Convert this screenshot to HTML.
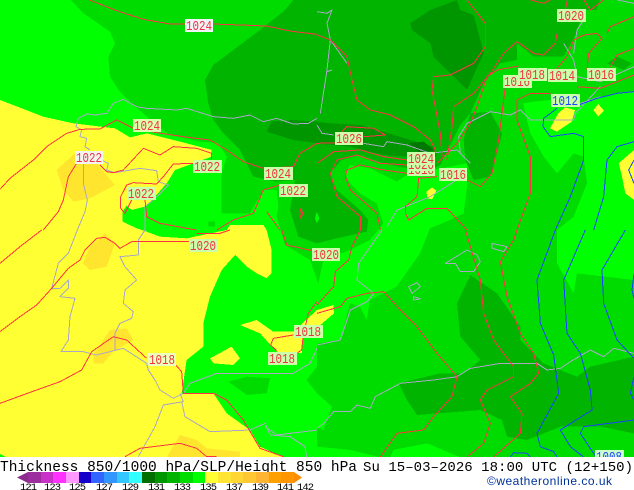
<!DOCTYPE html>
<html><head><meta charset="utf-8">
<style>
html,body{margin:0;padding:0;background:#fff;width:634px;height:490px;overflow:hidden}
svg{display:block}
.l path{fill:none;stroke-width:1;vector-effect:non-scaling-stroke;stroke-linejoin:round;shape-rendering:crispEdges}
.f path{shape-rendering:crispEdges}
.r path{stroke:#ff3344}
.b path{stroke:#1a44ff}
.g path{stroke:#a8a8c4}
text{font-family:"Liberation Mono","DejaVu Sans Mono",monospace}
.t{font-size:14px;fill:#ee3344;text-anchor:middle}
</style></head><body>
<svg width="634" height="490" viewBox="0 0 634 490" xmlns="http://www.w3.org/2000/svg">
<rect width="634" height="490" fill="#fff"/>
<rect width="634" height="457" fill="#00ff00"/>
<g transform="scale(.33333)" class="f">
<!-- dc -->
<path fill="#00dc00" d="M213,0 L250,40 330,95 345,130 325,170 330,230 360,275 400,315 470,375 510,405 600,425 655,430 680,470 665,520 665,640 750,640 790,570 830,570 835,620 830,650 855,735 930,780 955,850 970,780 1050,750 1110,720 1150,670 1130,610 1080,580 1050,550 1035,520 1050,495 1110,505 1190,545 1220,525 1401,490 1401,560 1391,640 1350,660 1290,685 1260,760 1190,860 1150,880 1110,900 1100,960 1080,920 1050,910 1021,1020 951,1030 951,1100 920,1140 951,1180 996,1220 970,1290 951,1280 951,1340 1051,1350 1141,1372 1902,1372 1902,0 Z"/>
<path fill="#00dc00" d="M685,1145 L740,1130 810,1135 800,1180 740,1185 Z"/>
<path fill="#00dc00" d="M745,1290 L790,1345 860,1372 800,1372 Z M625,665 L645,665 645,680 625,680 Z"/>
<!-- bright patches -->
<path fill="#00ff00" d="M1570,310 1601,305 1651,300 1741,310 1851,280 1902,275 1902,840 1731,820 1721,880 1671,790 1671,690 1721,650 1761,550 1751,470 1721,460 1671,520 1631,470 1591,400 1576,340 Z"/>
<path fill="#00ff00" d="M1171,1372 1180,1350 1281,1330 1381,1372 Z"/>
<!-- b4 -->
<path fill="#00b400" d="M880,0 850,35 780,90 700,150 640,195 615,240 625,310 640,360 670,400 720,450 760,530 830,545 885,540 870,630 895,710 950,730 1010,715 1100,695 1105,660 1080,630 1010,570 990,520 1025,480 1081,465 1151,490 1221,505 1291,510 1321,495 1381,375 1411,340 1451,250 1500,190 1551,180 1551,130 1601,170 1690,170 1730,100 1740,60 1760,0 Z"/>
<path fill="#00b400" d="M1740,0 1800,0 1790,30 1750,30 Z"/>
<path fill="#00ff00" d="M945,655 950,635 958,655 950,670 Z"/>
<path fill="#00b400" d="M1411,340 1471,335 1506,400 1491,460 1471,530 1421,540 1396,480 1391,420 Z"/>
<path fill="#00b400" d="M1821,190 1851,170 1896,190 1871,210 Z"/>
<path fill="#00b400" d="M1196,1150 1321,1120 1391,1120 1441,1080 1381,1010 1371,910 1411,825 1491,880 1561,980 1561,1020 1631,1090 1731,1130 1771,1100 1902,1070 1902,1300 1801,1280 1681,1280 1581,1320 1521,1310 1506,1260 1441,1230 1251,1245 1221,1200 Z"/>
<!-- 009600 -->
<path fill="#009600" d="M800,395 815,365 880,360 951,365 991,370 1081,375 1151,395 1231,420 1301,440 1311,470 1221,470 1151,465 1051,440 951,430 880,420 Z"/>
<path fill="#009600" d="M1231,70 1291,30 1371,0 1381,30 1421,45 1441,120 1451,160 1401,270 1351,220 1301,170 1291,130 1236,90 Z"/>
<path fill="#007800" d="M1226,430 1271,425 1301,450 1261,460 Z"/>
<!-- yellow main -->
<path fill="#ffff33" d="M0,275 L0,300 130,350 220,370 345,385 390,412 440,400 560,430 635,450 635,470 580,490 525,510 500,550 465,590 435,620 395,630 380,617 367,635 368,665 410,685 440,695 480,710 560,715 680,690 690,675 790,675 800,690 815,750 815,820 800,835 770,820 740,800 705,765 665,810 630,890 610,970 610,1040 560,1080 545,1180 640,1180 680,1240 750,1290 780,1340 850,1372 0,1372 Z"/>
<path fill="#00ff00" d="M0,1362 20,1372 0,1372 Z"/>
<path fill="#ffe52e" d="M170,510 230,455 290,490 345,555 270,595 220,605 190,570 Z"/>
<path fill="#ffe52e" d="M270,740 315,700 345,730 320,800 270,810 248,790 Z"/>
<path fill="#ffe52e" d="M280,1065 330,990 380,985 400,1020 340,1055 310,1090 280,1090 Z"/>
<path fill="#ffe52e" d="M500,1372 540,1305 590,1320 620,1345 720,1355 720,1372 Z"/>
<path fill="#ffff33" d="M630,1075 695,1040 720,1075 700,1095 640,1090 Z"/>
<path fill="#ffff33" d="M720,975 770,960 820,995 880,995 951,930 1000,915 1002,940 961,975 951,1000 910,1010 905,1060 830,1055 780,1000 Z"/>
<path fill="#ffff33" d="M1650,385 1675,340 1695,322 1725,330 1715,365 1670,395 Z"/>
<path fill="#ffff33" d="M1780,330 1795,312 1812,332 1795,350 Z"/>
<path fill="#ffff33" d="M1279,575 1296,562 1309,572 1296,598 1283,595 Z"/>
<path fill="#ffff33" d="M1856,490 1902,450 1902,600 1876,580 1866,530 Z"/>
</g>

<!-- zoom 3 -->
<g transform="scale(.33333)">
<g class="l g">
<path d="M951,355 925,370 880,372 830,355 790,365 750,345 700,355 640,350 560,325 530,330 440,325 410,320 370,298 340,310 320,340 285,345 260,342 235,355 228,380 245,390 240,410 260,415 255,440 270,450"/>
<path d="M250,480 250,550 262,600 255,635 232,690"/>
<path d="M300,478 325,490 320,510 345,518 420,505 470,512 475,545 505,555 470,590 435,620 435,690"/>
</g>
<g class="l r">
<path d="M268,0 350,32 430,58 510,72 640,72 800,78 870,93 951,103"/>
<path d="M0,568 30,535 100,480 140,440 200,400 240,388 300,387 350,360 400,385 470,398 550,410 630,420 680,450 730,485 790,505 880,500 900,460 951,430"/>
<path d="M130,690 175,635 190,600 205,530 230,490"/>
<path d="M300,495 320,515 340,518 370,510 430,445 480,465 520,440 590,445 635,460 635,478"/>
<path d="M580,490 520,492 490,530 470,552 400,548 380,555 362,590 362,625 375,640 395,600"/>
<path d="M435,600 440,650 480,670 560,685 590,690"/>
<path d="M650,690 700,660 760,640 790,570 840,555"/>
<path d="M800,635 840,690"/>
<path d="M903,625 908,640 903,655 899,640 Z"/>
</g>
</g>
<!-- zoom 4 -->
<g transform="translate(317,0) scale(.33333)">
<g class="l g">
<path d="M0,35 30,40 45,30 30,70 40,120 90,190"/>
<path d="M40,120 30,210 10,340"/>
<path d="M45,210 30,215"/>
<path d="M0,375 15,400 50,405"/>
<path d="M140,430 200,440 210,425 270,435 340,460 420,450 460,490"/>
<path d="M450,520 340,590 240,630 210,680"/>
<path d="M430,460 425,410 450,370 520,335 580,345 610,330 640,360 770,360 775,340 850,260"/>
<path d="M790,310 850,290"/>
<path d="M740,130 770,180 780,230 850,245 951,200"/>
<path d="M770,160 780,90 800,60"/>
<path d="M900,0 951,10"/>
</g>
<g class="l r">
<path d="M0,105 40,120 90,170 105,240 120,300 160,330 220,345 290,380 340,420 355,450 350,480"/>
<path d="M450,0 505,70 505,140 470,190 400,225 350,230 345,270 370,400 375,470"/>
<path d="M600,125 560,160 520,220 470,280 410,320 405,380 390,480"/>
<path d="M605,198 540,210 510,230 480,320 460,370 420,430 360,490"/>
<path d="M565,260 545,420 525,520 490,560 450,540"/>
<path d="M720,100 715,130 680,165 650,160 600,125"/>
<path d="M600,690 640,580 640,470 600,360 600,300 640,280 700,280"/>
<path d="M690,240 750,170 770,120 800,105 840,100 855,115 815,160 810,210"/>
<path d="M780,260 850,265 951,225"/>
<path d="M951,145 900,165 880,200"/>
<path d="M870,100 880,80 951,50"/>
<path d="M640,0 680,10 700,0"/>
<path d="M800,0 820,30 860,0"/>
<path d="M751,0 745,30"/>
<path d="M0,430 60,428"/>
<path d="M75,395 90,380 170,385 205,405 140,410"/>
<path d="M0,490 50,455 130,450 200,470 270,480"/>
<path d="M130,690 130,650 60,590 40,520 60,480 120,465 190,490 270,495"/>
<path d="M190,690 180,640 100,570 85,530 90,510 130,495 200,510 270,520"/>
<path d="M360,530 305,535 300,590 265,620 265,640 275,660 330,625 390,625 450,690"/>
</g>
<g class="l b">
<path d="M715,690 760,590 800,480 800,410 770,400 700,410 678,380 680,355 720,325"/>
<path d="M830,690 860,590 870,480 900,440 951,425"/>
<path d="M785,315 840,295 900,280 951,275"/>
<path d="M951,480 935,510 951,550"/>
</g>
</g>
<!-- zoom 5 -->
<g transform="translate(0,230) scale(.33333)">
<g class="l g">
<path d="M232,0 205,70 175,100 155,175 180,175 205,150 205,175 180,200 225,205 210,260 205,330 183,365 250,365 290,375 370,355 440,400 445,420 465,450 480,480 520,505 550,490 570,460 650,430 800,430 880,430 930,400 951,355"/>
<path d="M435,0 415,30 415,75 360,80 375,110 410,150 375,180 370,220 400,245 395,265 360,280 345,310 345,360"/>
<path d="M540,490 550,515 490,525 465,590 415,680"/>
<path d="M545,515 555,560 630,605 750,600 795,580 810,615 870,620 915,650 920,681"/>
<path d="M795,590 830,615 951,600"/>
</g>
<g class="l r">
<path d="M0,100 60,50 125,0"/>
<path d="M0,305 60,260 110,225 155,175 205,115 240,90 255,60 290,25 315,22 345,40 360,55 395,35 570,35"/>
<path d="M590,10 660,10 690,0"/>
<path d="M0,520 110,480 180,455 245,420 275,365 340,320 380,330 440,385"/>
<path d="M527,405 545,425 550,490 640,490 680,510 730,570 780,655 850,680"/>
<path d="M375,680 420,655 540,640 590,655 620,680 650,680"/>
<path d="M830,362 812,345 820,325 880,315"/>
<path d="M893,368 905,360 910,315 925,250 951,215"/>
<path d="M845,0 860,45 951,65"/>
</g>
</g>
<!-- zoom 6 -->
<g transform="translate(317,230) scale(.33333)">
<g class="l g">
<path d="M195,0 125,100 120,150 170,190 150,215 100,240 70,330 0,345"/>
<path d="M0,595 20,580 50,545 100,545 120,525 160,535 175,500 250,460 350,450 420,440 460,415 550,400 660,400 690,420 730,415 760,395 820,360 860,380 890,355 951,370"/>
<path d="M385,100 450,60 480,75 490,95 470,125 430,125 415,100 Z"/>
<path d="M525,40 570,50 560,65 525,55 Z"/>
<path d="M275,170 300,158 310,170 285,190 Z"/>
<path d="M290,200 310,207 290,210 Z"/>
</g>
<g class="l r">
<path d="M0,225 50,170 55,125 95,90 105,50 130,0"/>
<path d="M0,250 70,230 90,205 150,190 200,185 250,240 300,290 360,370 420,440 405,500 350,560 320,600 240,610 190,681"/>
<path d="M445,0 490,150 500,250 530,330 590,410 590,440 510,480 490,510 520,580 500,640 450,681"/>
<path d="M600,0 590,30 550,95 570,200 610,310 650,370 665,430 640,460 580,500 615,550 610,610 530,681"/>
</g>
<g class="l b">
<path d="M715,0 660,150 670,280 710,375 725,490 660,610 670,650 710,665 720,681"/>
<path d="M805,0 740,150 750,310 790,370 820,480 825,540 730,600 760,650 800,681"/>
<path d="M925,0 855,120 860,220 900,330 951,385"/>
<path d="M951,130 945,180 951,205"/>
<path d="M580,681 590,668 630,670 640,681"/>
<path d="M951,570 800,590 790,610 830,670 840,681"/>
<path d="M951,440 940,490 951,510"/>
</g>
</g>

<!-- labels -->
<g lengthAdjust="spacingAndGlyphs">
<rect x="185" y="19" width="28" height="13" fill="#f0f4f6"/><text class="t" x="199" y="30" textLength="26" lengthAdjust="spacingAndGlyphs">1024</text>
<rect x="133" y="119" width="28" height="13" fill="#ddffaa"/><text class="t" x="147" y="130" textLength="26" lengthAdjust="spacingAndGlyphs">1024</text>
<rect x="75" y="151" width="28" height="13" fill="#f2f4f0"/><text class="t" x="89" y="162" textLength="26" lengthAdjust="spacingAndGlyphs">1022</text>
<rect x="193" y="160" width="29" height="13" fill="#ccffaa"/><text class="t" x="207" y="171" textLength="26" lengthAdjust="spacingAndGlyphs">1022</text>
<rect x="127" y="187" width="29" height="13" fill="#ccffaa"/><text class="t" x="141" y="198" textLength="26" lengthAdjust="spacingAndGlyphs">1022</text>
<rect x="264" y="167" width="29" height="13" fill="#ccffaa"/><text class="t" x="278" y="178" textLength="26" lengthAdjust="spacingAndGlyphs">1024</text>
<rect x="279" y="184" width="29" height="13" fill="#ccffaa"/><text class="t" x="293" y="195" textLength="26" lengthAdjust="spacingAndGlyphs">1022</text>
<rect x="557" y="9" width="29" height="13" fill="#ccffaa"/><text class="t" x="571" y="20" textLength="26" lengthAdjust="spacingAndGlyphs">1020</text>
<rect x="503" y="75" width="29" height="13" fill="#ccffaa"/><text class="t" x="517" y="86" textLength="26" lengthAdjust="spacingAndGlyphs">1016</text>
<rect x="518" y="68" width="29" height="13" fill="#ccffaa"/><text class="t" x="532" y="79" textLength="26" lengthAdjust="spacingAndGlyphs">1018</text>
<rect x="548" y="69" width="29" height="13" fill="#ccffaa"/><text class="t" x="562" y="80" textLength="26" lengthAdjust="spacingAndGlyphs">1014</text>
<rect x="587" y="68" width="29" height="13" fill="#ccffaa"/><text class="t" x="601" y="79" textLength="26" lengthAdjust="spacingAndGlyphs">1016</text>
<rect x="551" y="94" width="29" height="13" fill="#ccffaa"/><text class="t" x="565" y="105" textLength="26" lengthAdjust="spacingAndGlyphs" style="fill:#1a44ff">1012</text>
<rect x="335" y="132" width="28" height="13" fill="#ccffaa"/><text class="t" x="349" y="143" textLength="26" lengthAdjust="spacingAndGlyphs">1026</text>
<rect x="407" y="163" width="28" height="13" fill="#ccffaa"/><text class="t" x="421" y="174" textLength="26" lengthAdjust="spacingAndGlyphs">1018</text>
<rect x="407" y="158" width="28" height="13" fill="#ccffaa"/><text class="t" x="421" y="169" textLength="26" lengthAdjust="spacingAndGlyphs">1020</text>
<rect x="407" y="152" width="28" height="13" fill="#ccffaa"/><text class="t" x="421" y="163" textLength="26" lengthAdjust="spacingAndGlyphs">1024</text>
<rect x="439" y="168" width="28" height="13" fill="#ccffaa"/><text class="t" x="453" y="179" textLength="26" lengthAdjust="spacingAndGlyphs">1016</text>
<rect x="189" y="239" width="28" height="13" fill="#ccffaa"/><text class="t" x="203" y="250" textLength="26" lengthAdjust="spacingAndGlyphs">1020</text>
<rect x="148" y="353" width="28" height="13" fill="#eeffbb"/><text class="t" x="162" y="364" textLength="26" lengthAdjust="spacingAndGlyphs">1018</text>
<rect x="268" y="352" width="29" height="13" fill="#ccffaa"/><text class="t" x="282" y="363" textLength="26" lengthAdjust="spacingAndGlyphs">1018</text>
<rect x="294" y="325" width="29" height="13" fill="#ccffaa"/><text class="t" x="308" y="336" textLength="26" lengthAdjust="spacingAndGlyphs">1018</text>
<rect x="312" y="248" width="28" height="13" fill="#ccffaa"/><text class="t" x="326" y="259" textLength="26" lengthAdjust="spacingAndGlyphs">1020</text>
<rect x="595" y="450" width="29" height="13" fill="#ccffcc"/><text class="t" x="609" y="461" textLength="26" lengthAdjust="spacingAndGlyphs" style="fill:#1a44ff">1008</text>
</g>

<!-- footer -->
<rect x="0" y="457" width="634" height="33" fill="#fff"/>
<text x="0" y="471" font-size="14.5" fill="#000" textLength="357">Thickness 850/1000 hPa/SLP/Height 850 hPa</text>
<text x="363" y="471" font-size="14" fill="#000" textLength="270">Su 15–03–2026 18:00 UTC (12+150)</text>
<text x="487" y="485" font-size="12" fill="#003399" textLength="125" style="font-family:'Liberation Sans',sans-serif">©weatheronline.co.uk</text>

<g shape-rendering="crispEdges">
<path d="M17,477.5 L28,472 L28,483 Z" fill="#8c2d8c" shape-rendering="auto"/>
<rect x="28" y="472" width="13" height="11" fill="#9c2e9e"/>
<rect x="41" y="472" width="12" height="11" fill="#c832c8"/>
<rect x="53" y="472" width="13" height="11" fill="#ff32ff"/>
<rect x="66" y="472" width="13" height="11" fill="#ff99ff"/>
<rect x="79" y="472" width="12" height="11" fill="#1400c8"/>
<rect x="91" y="472" width="13" height="11" fill="#3264ff"/>
<rect x="104" y="472" width="13" height="11" fill="#3296ff"/>
<rect x="117" y="472" width="12" height="11" fill="#32c8ff"/>
<rect x="129" y="472" width="13" height="11" fill="#32ffff"/>
<rect x="142" y="472" width="13" height="11" fill="#006e00"/>
<rect x="155" y="472" width="12" height="11" fill="#009600"/>
<rect x="167" y="472" width="13" height="11" fill="#00b400"/>
<rect x="180" y="472" width="13" height="11" fill="#00dc00"/>
<rect x="193" y="472" width="12" height="11" fill="#00ff00"/>
<rect x="205" y="472" width="13" height="11" fill="#ffff33"/>
<rect x="218" y="472" width="13" height="11" fill="#ffe533"/>
<rect x="231" y="472" width="12" height="11" fill="#ffd633"/>
<rect x="243" y="472" width="13" height="11" fill="#ffc832"/>
<rect x="256" y="472" width="13" height="11" fill="#ffb432"/>
<rect x="269" y="472" width="12" height="11" fill="#ffa000"/>
<rect x="281" y="472" width="13" height="11" fill="#ff9600"/>
<path d="M294,472 L302,477.5 L294,483 Z" fill="#ff8c00" shape-rendering="auto"/>
</g>
<g font-size="10.5" fill="#000">
<text x="20" y="490" textLength="17">121</text>
<text x="44" y="490" textLength="17">123</text>
<text x="69" y="490" textLength="17">125</text>
<text x="96" y="490" textLength="17">127</text>
<text x="122" y="490" textLength="17">129</text>
<text x="148" y="490" textLength="17">131</text>
<text x="174" y="490" textLength="17">133</text>
<text x="200" y="490" textLength="17">135</text>
<text x="226" y="490" textLength="17">137</text>
<text x="252" y="490" textLength="17">139</text>
<text x="277" y="490" textLength="17">141</text>
<text x="297" y="490" textLength="17">142</text>
</g>
</svg>
</body></html>
